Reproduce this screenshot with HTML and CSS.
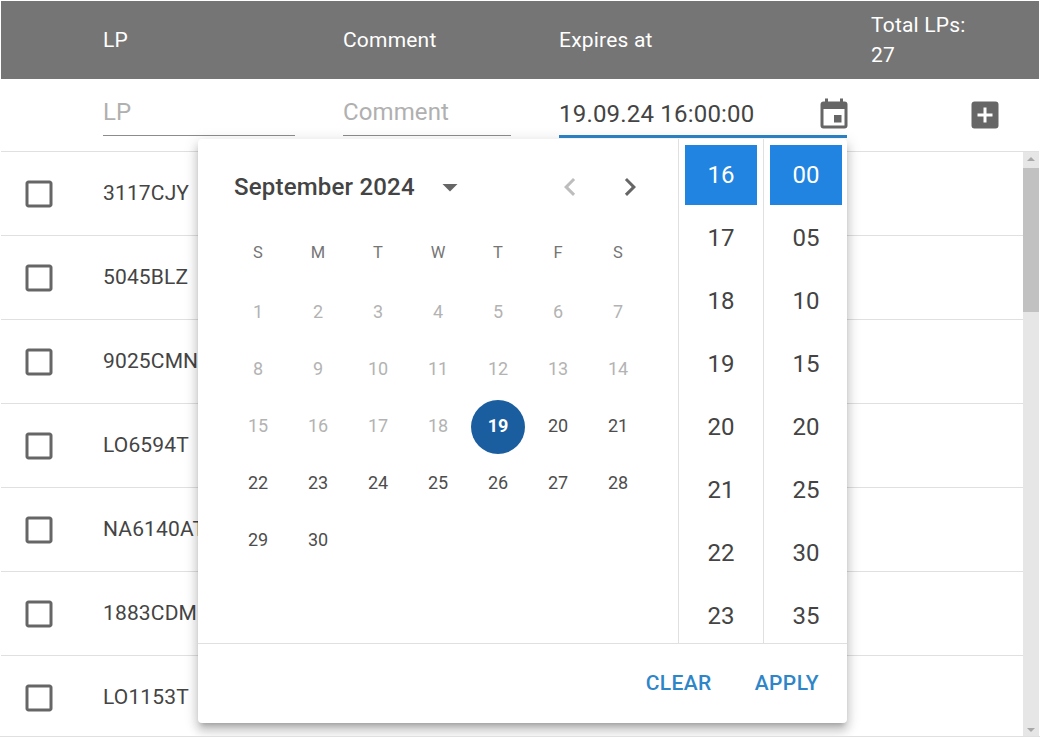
FILE: index.html
```html
<!DOCTYPE html>
<html>

<head>
    <title>License plates</title>
    <link rel="stylesheet" href="styles.css">
</head>

<body>
    <div class="page">
        <div class="table-head">
            <div class="col-lp">LP</div>
            <div class="col-comment">Comment</div>
            <div class="col-expires">Expires at</div>
            <div class="col-total">Total LPs:<br>27</div>
        </div>

        <div class="filter-row">
            <div class="col-lp">
                <div class="field field-lp"><span class="placeholder">LP</span></div>
            </div>
            <div class="col-comment">
                <div class="field field-comment"><span class="placeholder">Comment</span></div>
            </div>
            <div class="col-expires">
                <div class="field field-expires">
                    <span class="field-value">19.09.24 16:00:00</span>
                    <svg class="icon icon-calendar" viewBox="0 0 24 24"><path d="M19 19H5V8h14m-3-7v2H8V1H6v2H5c-1.11 0-2 .89-2 2v14a2 2 0 0 0 2 2h14a2 2 0 0 0 2-2V5a2 2 0 0 0-2-2h-1V1m-1 11h-5v5h5v-5z"/></svg>
                </div>
            </div>
            <div class="col-total">
                <svg class="icon icon-add" viewBox="0 0 24 24"><path d="M17 13h-4v4h-2v-4H7v-2h4V7h2v4h4m2-8H5c-1.11 0-2 .89-2 2v14a2 2 0 0 0 2 2h14a2 2 0 0 0 2-2V5a2 2 0 0 0-2-2z"/></svg>
            </div>
        </div>

        <div class="table-body">
            <div class="rows">
                <div class="row"><svg class="icon" viewBox="0 0 24 24"><path d="M19 5v14H5V5h14m0-2H5c-1.1 0-2 .9-2 2v14c0 1.1.9 2 2 2h14c1.1 0 2-.9 2-2V5c0-1.1-.9-2-2-2z"/></svg><span class="plate">3117CJY</span></div>
                <div class="row"><svg class="icon" viewBox="0 0 24 24"><path d="M19 5v14H5V5h14m0-2H5c-1.1 0-2 .9-2 2v14c0 1.1.9 2 2 2h14c1.1 0 2-.9 2-2V5c0-1.1-.9-2-2-2z"/></svg><span class="plate">5045BLZ</span></div>
                <div class="row"><svg class="icon" viewBox="0 0 24 24"><path d="M19 5v14H5V5h14m0-2H5c-1.1 0-2 .9-2 2v14c0 1.1.9 2 2 2h14c1.1 0 2-.9 2-2V5c0-1.1-.9-2-2-2z"/></svg><span class="plate">9025CMN</span></div>
                <div class="row"><svg class="icon" viewBox="0 0 24 24"><path d="M19 5v14H5V5h14m0-2H5c-1.1 0-2 .9-2 2v14c0 1.1.9 2 2 2h14c1.1 0 2-.9 2-2V5c0-1.1-.9-2-2-2z"/></svg><span class="plate">LO6594T</span></div>
                <div class="row"><svg class="icon" viewBox="0 0 24 24"><path d="M19 5v14H5V5h14m0-2H5c-1.1 0-2 .9-2 2v14c0 1.1.9 2 2 2h14c1.1 0 2-.9 2-2V5c0-1.1-.9-2-2-2z"/></svg><span class="plate">NA6140AT</span></div>
                <div class="row"><svg class="icon" viewBox="0 0 24 24"><path d="M19 5v14H5V5h14m0-2H5c-1.1 0-2 .9-2 2v14c0 1.1.9 2 2 2h14c1.1 0 2-.9 2-2V5c0-1.1-.9-2-2-2z"/></svg><span class="plate">1883CDM</span></div>
                <div class="row"><svg class="icon" viewBox="0 0 24 24"><path d="M19 5v14H5V5h14m0-2H5c-1.1 0-2 .9-2 2v14c0 1.1.9 2 2 2h14c1.1 0 2-.9 2-2V5c0-1.1-.9-2-2-2z"/></svg><span class="plate">LO1153T</span></div>
            </div>
            <div class="scrollbar">
                <div class="arrow-up"></div>
                <div class="thumb"></div>
                <div class="arrow-down"></div>
            </div>
        </div>

        <div class="picker">
            <div class="picker-main">
                <div class="calendar">
                    <div class="calendar-head">
                        <span class="month">September 2024</span>
                        <svg class="icon icon-menu" viewBox="0 0 24 24"><path d="M7 10l5 5 5-5z"/></svg>
                        <div class="month-nav">
                            <svg class="icon icon-disabled" viewBox="0 0 24 24"><path d="M15.41 16.58L10.83 12l4.58-4.59L14 6l-6 6 6 6 1.41-1.42z"/></svg>
                            <svg class="icon" viewBox="0 0 24 24"><path d="M8.59 16.58L13.17 12 8.59 7.41 10 6l6 6-6 6-1.41-1.42z"/></svg>
                        </div>
                    </div>
                    <div class="days">
                        <div class="weekday">S</div><div class="weekday">M</div><div class="weekday">T</div><div class="weekday">W</div><div class="weekday">T</div><div class="weekday">F</div><div class="weekday">S</div>
                        <div class="day off">1</div><div class="day off">2</div><div class="day off">3</div><div class="day off">4</div><div class="day off">5</div><div class="day off">6</div><div class="day off">7</div>
                        <div class="day off">8</div><div class="day off">9</div><div class="day off">10</div><div class="day off">11</div><div class="day off">12</div><div class="day off">13</div><div class="day off">14</div>
                        <div class="day off">15</div><div class="day off">16</div><div class="day off">17</div><div class="day off">18</div><div class="day"><span class="today">19</span></div><div class="day">20</div><div class="day">21</div>
                        <div class="day">22</div><div class="day">23</div><div class="day">24</div><div class="day">25</div><div class="day">26</div><div class="day">27</div><div class="day">28</div>
                        <div class="day">29</div><div class="day">30</div>
                    </div>
                </div>
                <div class="time-col">
                    <div class="time active">16</div>
                    <div class="time">17</div>
                    <div class="time">18</div>
                    <div class="time">19</div>
                    <div class="time">20</div>
                    <div class="time">21</div>
                    <div class="time">22</div>
                    <div class="time">23</div>
                </div>
                <div class="time-col">
                    <div class="time active">00</div>
                    <div class="time">05</div>
                    <div class="time">10</div>
                    <div class="time">15</div>
                    <div class="time">20</div>
                    <div class="time">25</div>
                    <div class="time">30</div>
                    <div class="time">35</div>
                </div>
            </div>
            <div class="picker-foot">
                <button class="text-button">Clear</button>
                <button class="text-button">Apply</button>
            </div>
        </div>
    </div>
</body>

</html>
```
FILE: styles.css
```css
* {
    margin: 0;
    padding: 0;
    box-sizing: border-box;
    font-family: Roboto, sans-serif;
}

html,
body {
    height: 100%;
    overflow: hidden;
    background: #fff;
}

.page {
    position: relative;
    height: 737px;
    padding: 1px 1px 1px;
    border-bottom: 1px solid #e0e0e0;
    overflow: hidden;
    color: #444;
}

.icon {
    display: block;
    width: 36px;
    height: 36px;
    fill: #666;
    flex: none;
}

.table-head,
.filter-row {
    display: flex;
    padding-left: 102px;
}

.col-lp {
    width: 240px;
}

.col-comment {
    width: 216px;
}

.col-expires {
    width: 312px;
}

.table-head {
    height: 78px;
    align-items: center;
    background: #757575;
    color: #fff;
    font-size: 21px;
    line-height: 30px;
    letter-spacing: 0.2px;
}

.col-total {
    flex: 1;
}

.filter-row {
    height: 73px;
    border-bottom: 1px solid #e0e0e0;
}

.field {
    display: flex;
    align-items: center;
    height: 57px;
    border-bottom: 1px solid #8c8c8c;
    font-size: 24px;
    position: relative;
}

.field-lp {
    width: 192px;
}

.field-comment {
    width: 168px;
    letter-spacing: 0.1px;
}

.field-expires {
    width: 288px;
    height: 59px;
    border-bottom: 3px solid #2a7fc1;
    position: relative;
    z-index: 2;
    justify-content: space-between;
}

.placeholder {
    color: #b0b0b0;
    padding-top: 10px;
}

.field-value {
    padding-top: 13px;
    letter-spacing: 0.2px;
    color: #444;
}

.icon-calendar {
    margin: 16px -5px 0 0;
}

.icon-add {
    margin: 18px 0 0 96px;
}

.table-body {
    display: flex;
    height: 585px;
}

.rows {
    flex: 1;
    overflow: hidden;
}

.row {
    display: flex;
    align-items: center;
    height: 84px;
    padding-left: 20px;
    border-bottom: 1px solid #e0e0e0;
    font-size: 21px;
    letter-spacing: 0.15px;
}

.row .icon {
    margin-right: 46px;
}

.plate {
    padding-bottom: 1px;
}

.scrollbar {
    position: relative;
    width: 16px;
    margin-right: 0;
    background: #e6e6e6;
}

.thumb {
    position: absolute;
    top: 16px;
    left: 0;
    width: 16px;
    height: 144px;
    background: #c1c1c1;
}

.arrow-up,
.arrow-down {
    position: absolute;
    left: 4px;
    width: 0;
    height: 0;
    border-left: 4px solid transparent;
    border-right: 4px solid transparent;
}

.arrow-up {
    top: 5px;
    border-bottom: 4px solid #a8a8a8;
}

.arrow-down {
    bottom: 5px;
    border-top: 4px solid #a8a8a8;
}

/* date picker sits over the table */
.picker {
    position: absolute;
    top: 139px;
    left: 198px;
    width: 649px;
    height: 584px;
    background: #fff;
    border-radius: 4px;
    box-shadow: 0 5px 5px -3px rgba(0, 0, 0, 0.2), 0 8px 10px 1px rgba(0, 0, 0, 0.14), 0 3px 14px 2px rgba(0, 0, 0, 0.12);
    z-index: 1;
}

.picker-main {
    display: flex;
    height: 505px;
    border-bottom: 1px solid #e0e0e0;
}

.calendar {
    flex: none;
    width: 480px;
    padding: 0 0 0 30px;
}

.calendar-head {
    display: flex;
    align-items: center;
    height: 96px;
}

.month {
    width: 180px;
    margin-left: 6px;
    font-size: 24px;
    font-weight: 500;
    letter-spacing: 0.2px;
    white-space: nowrap;
}

.icon-menu {
    margin-left: 18px;
}

.month-nav {
    display: flex;
    gap: 24px;
    margin-left: 84px;
}

.icon-disabled {
    fill: #bdbdbd;
}

.days {
    display: grid;
    grid-template-columns: repeat(7, 60px);
    grid-template-rows: 58px;
    grid-auto-rows: 57px;
    margin-top: -11px;
}

.weekday,
.day {
    display: flex;
    align-items: center;
    justify-content: center;
    font-size: 18px;
    color: #4d4d4d;
}

.day {
    padding-top: 1px;
}

.weekday {
    color: #757575;
    font-size: 16.5px;
    padding-bottom: 1px;
}

.day.off {
    color: #b3b3b3;
}

.today {
    display: flex;
    align-items: center;
    justify-content: center;
    width: 54px;
    height: 54px;
    margin-top: 3px;
    padding-bottom: 2px;
    border-radius: 50%;
    background: #1b5e9f;
    color: #fff;
    font-weight: 700;
}

.time-col {
    flex: none;
    width: 85px;
    padding: 6px 6px 0;
    border-left: 1px solid #e0e0e0;
    overflow: hidden;
}

.time-col:last-child {
    width: 84px;
    padding-right: 0;
}

.time {
    display: flex;
    align-items: center;
    justify-content: center;
    width: 72px;
    height: 60px;
    margin-bottom: 3px;
    font-size: 24px;
    color: #444;
}

.time.active {
    background: #2184e0;
    color: #fff;
}

.picker-foot {
    display: flex;
    justify-content: flex-end;
    gap: 43px;
    padding: 27px 28px 0 0;
}

.text-button {
    border: none;
    background: none;
    color: #2e86c9;
    font-size: 21px;
    font-weight: 500;
    line-height: 24px;
    letter-spacing: 0.4px;
    text-transform: uppercase;
    cursor: pointer;
}
```
